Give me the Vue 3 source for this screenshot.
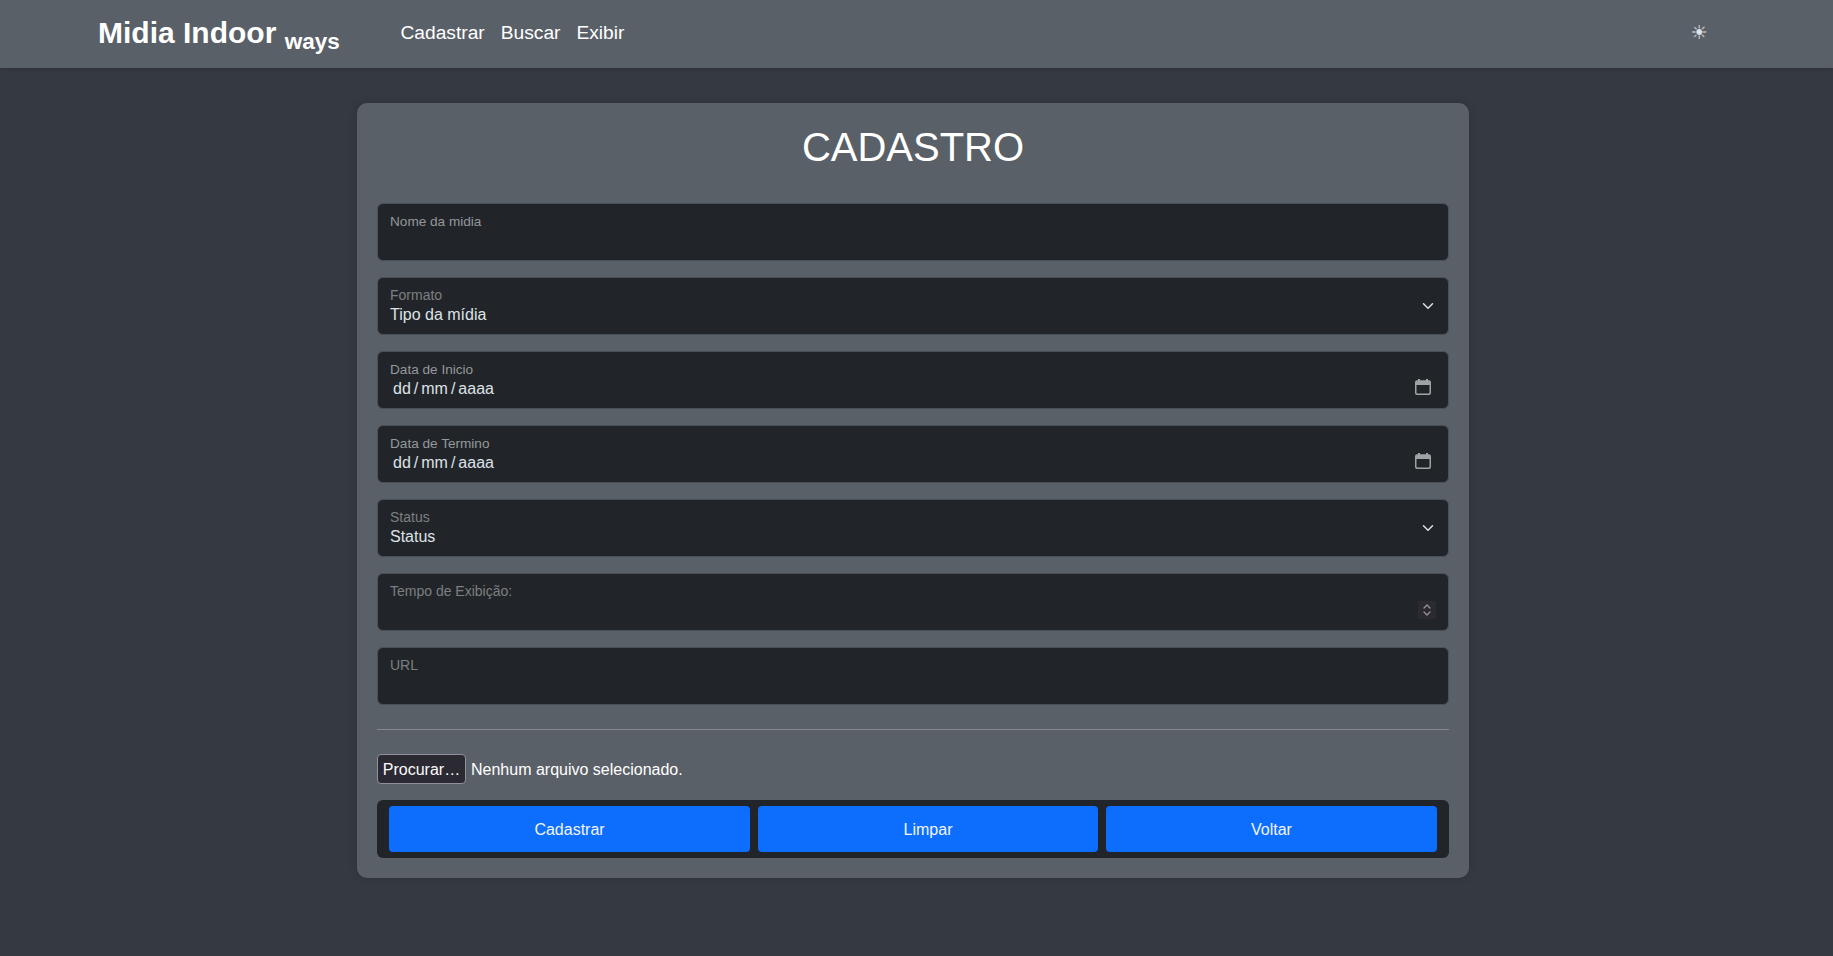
<script setup>
const links = ['Cadastrar', 'Buscar', 'Exibir']
const fields = [
  { label: 'Nome da midia', type: 'text', scaled: true },
  { label: 'Formato', type: 'select', value: 'Tipo da mídia' },
  { label: 'Data de Inicio', type: 'date', scaled: true },
  { label: 'Data de Termino', type: 'date', scaled: true },
  { label: 'Status', type: 'select', value: 'Status' },
  { label: 'Tempo de Exibição:', type: 'number' },
  { label: 'URL', type: 'text' },
]
const actions = ['Cadastrar', 'Limpar', 'Voltar']
</script>

<template>
  <div class="page">
    <header class="topbar">
      <div class="brand">Midia Indoor <sub>ways</sub></div>
      <nav class="links">
        <a v-for="link in links" :key="link">{{ link }}</a>
      </nav>
      <span class="theme">☀</span>
    </header>

    <main class="card">
      <h1>CADASTRO</h1>

      <div class="fields">
        <div v-for="field in fields" :key="field.label" class="field">
          <div class="body">
            <span class="label" :class="{ scaled: field.scaled }">{{ field.label }}</span>
            <span v-if="field.type === 'select'" class="value">{{ field.value }}</span>
            <span v-if="field.type === 'date'" class="value date">
              <span>dd</span><i>/</i><span>mm</span><i>/</i><span>aaaa</span>
            </span>
          </div>
          <svg v-if="field.type === 'select'" class="chevron" viewBox="0 0 16 16">
            <path d="m2 5 6 6 6-6" fill="none" stroke="#dee2e6" stroke-width="2" stroke-linecap="round" stroke-linejoin="round" />
          </svg>
          <svg v-if="field.type === 'date'" class="calendar" viewBox="0 0 16 16">
            <path fill="#a0a3a4" fill-rule="evenodd" d="M3 0h2v1.300h6V0h2v1.300h1A2 2 0 0 1 16 3.300V14a2 2 0 0 1-2 2H2a2 2 0 0 1-2-2V3.300a2 2 0 0 1 2-2h1zM1.500 6v7.600a1 1 0 0 0 1 1h11a1 1 0 0 0 1-1V6z" />
          </svg>
          <span v-if="field.type === 'number'" class="spinner">
            <svg viewBox="0 0 18 18">
              <path d="m6 7 3-3 3 3M6 11l3 3 3-3" fill="none" stroke="#94939b" stroke-width="1.3" stroke-linecap="round" stroke-linejoin="round" />
            </svg>
          </span>
        </div>
      </div>

      <hr />

      <div class="file">
        <button class="browse">Procurar…</button>
        <span class="filename">Nenhum arquivo selecionado.</span>
      </div>

      <div class="actions">
        <button v-for="action in actions" :key="action">{{ action }}</button>
      </div>
    </main>
  </div>
</template>

<style>
body {
  margin: 0;
  background: #353942;
}
</style>

<style scoped>
.page {
  box-sizing: border-box;
  min-height: 100vh;
  background: #353942;
  color: #fff;
  font: 16px/24px "Liberation Sans", Arial, sans-serif;
}
.topbar {
  box-sizing: border-box;
  display: flex;
  align-items: center;
  height: 68px;
  padding: 0 125px 3px 98px;
  background: #5a6068;
  box-shadow: 0 1px 4px rgba(0, 0, 0, 0.15);
}
.brand {
  width: 302.5px;
  font-size: 30px;
  font-weight: 700;
  line-height: 45px;
  white-space: nowrap;
}
.brand sub {
  position: relative;
  bottom: -0.28em;
  font-size: 0.75em;
  line-height: 0;
  vertical-align: baseline;
}
.links {
  display: flex;
  flex: 1;
  gap: 16px;
  font-size: 19.2px;
  line-height: 29px;
}
.theme {
  width: 18px;
  text-align: center;
  font-family: "DejaVu Sans", sans-serif;
  font-size: 19.2px;
  color: #dee2e6;
}
.card {
  box-sizing: border-box;
  width: 1112px;
  margin: 35px 0 0 357px;
  padding: 20px;
  border-radius: 10px;
  background: #5a6068;
  box-shadow: 0 0 10px rgba(0, 0, 0, 0.14);
}
h1 {
  margin: 0 0 32px;
  font-size: 40px;
  font-weight: 400;
  line-height: 48px;
  text-align: center;
}
.fields {
  display: flex;
  flex-direction: column;
  gap: 16px;
}
.field {
  box-sizing: border-box;
  display: flex;
  justify-content: space-between;
  height: 58px;
  padding: 0 12px;
  border: 1px solid #495057;
  border-radius: 6px;
  background: #212529;
}
.body {
  display: flex;
  flex-direction: column;
  padding-top: 7px;
}
.label {
  height: 20px;
  font-size: 14px;
  line-height: 20px;
  color: #7d7f80;
}
.label.scaled {
  font-size: 13.6px;
  line-height: 22px;
  color: #94989b;
}
.value {
  line-height: 20px;
  color: #dee2e6;
}
.date {
  display: flex;
  padding-left: 3px;
}
.date i {
  font-style: normal;
  padding: 0 3px;
}
.chevron {
  width: 12px;
  height: 12px;
  margin: 22px 2px 0 0;
}
.calendar {
  width: 16px;
  height: 16px;
  margin: 27px 5px 0 0;
}
.spinner {
  width: 18px;
  height: 18px;
  margin-top: 27px;
  background: #2b2a33;
}
.spinner svg {
  display: block;
  width: 18px;
  height: 18px;
}
hr {
  height: 1px;
  margin: 24px 0;
  border: 0;
  background: #83878d;
}
.file {
  display: flex;
  align-items: center;
  gap: 5px;
  height: 30px;
}
.browse {
  box-sizing: border-box;
  width: 89px;
  height: 30px;
  padding: 2px 0 0;
  border: 1px solid #8f8f9d;
  border-radius: 4px;
  background: #2b2a33;
  color: #fbfbfe;
  font: inherit;
  line-height: 24px;
}
.filename {
  padding-top: 2px;
}
.actions {
  display: grid;
  grid-template-columns: 361fr 340fr 331fr;
  gap: 8px;
  margin-top: 16px;
  padding: 6px 12px;
  border-radius: 6px;
  background: #212529;
}
.actions button {
  height: 46px;
  padding: 2px 12px 0;
  border: 0;
  border-radius: 4px;
  background: #0d6efd;
  color: #f1f5fc;
  font: inherit;
}
@media (max-width: 1469px) {
  .card {
    width: auto;
    margin-right: 20px;
    margin-left: 20px;
  }
}
</style>
